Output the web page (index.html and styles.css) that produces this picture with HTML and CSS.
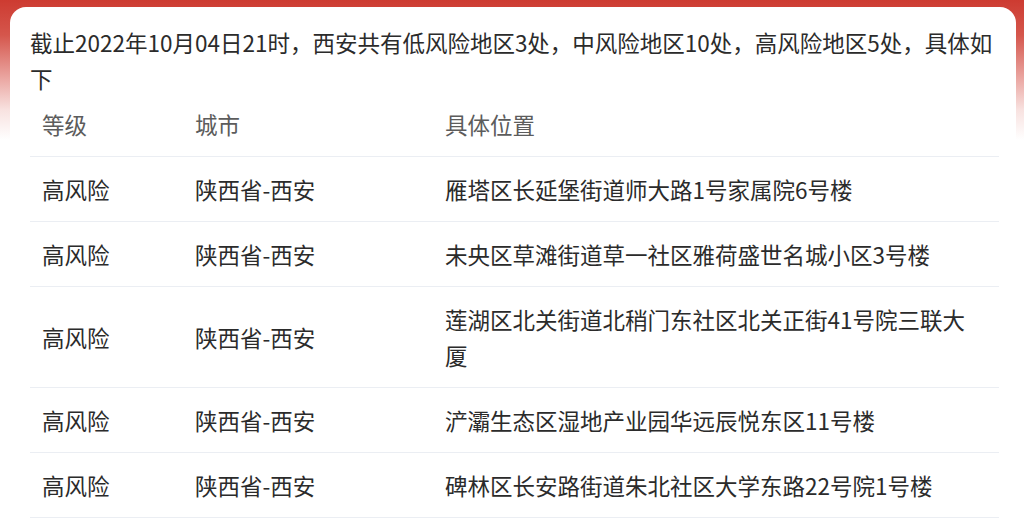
FILE: index.html
```html
<!DOCTYPE html>
<html lang="zh-CN">
<head>
<meta charset="utf-8">
<link rel="stylesheet" href="styles.css">
</head>
<body>
<div class="card">
  <p class="intro">截止2022年10月04日21时，西安共有低风险地区3处，中风险地区10处，高风险地区5处，具体如下</p>
  <table class="risk">
    <thead>
      <tr><th class="c1">等级</th><th class="c2">城市</th><th class="c3">具体位置</th></tr>
    </thead>
    <tbody>
      <tr><td>高风险</td><td>陕西省-西安</td><td>雁塔区长延堡街道师大路1号家属院6号楼</td></tr>
      <tr><td>高风险</td><td>陕西省-西安</td><td>未央区草滩街道草一社区雅荷盛世名城小区3号楼</td></tr>
      <tr><td>高风险</td><td>陕西省-西安</td><td>莲湖区北关街道北稍门东社区北关正街41号院三联大厦</td></tr>
      <tr><td>高风险</td><td>陕西省-西安</td><td>浐灞生态区湿地产业园华远辰悦东区11号楼</td></tr>
      <tr><td>高风险</td><td>陕西省-西安</td><td>碑林区长安路街道朱北社区大学东路22号院1号楼</td></tr>
    </tbody>
  </table>
</div>
</body>
</html>
```

FILE: styles.css
```css
html, body {
  margin: 0;
  padding: 0;
}
body {
  width: 1024px;
  height: 521px;
  overflow: hidden;
  background: linear-gradient(180deg, #cd3b31 0px, #d5564c 35px, #e9a09b 75px, #f8e2e0 110px, #ffffff 140px);
  font-family: "Noto Sans CJK SC", "Noto Sans", sans-serif;
}
.card {
  margin: 7px 8px 0 10px;
  background: #fff;
  border-radius: 16px 16px 0 0;
  padding: 17px 19px 0 20px;
  height: 514px;
  overflow: hidden;
  box-sizing: border-box;
}
.intro {
  margin: 0;
  font-size: 22.5px;
  line-height: 36px;
  color: #2b2b2b;
}
.risk {
  width: 969px;
  border-collapse: collapse;
  table-layout: fixed;
  font-size: 22.5px;
  margin-top: -4px;
}
.risk th, .risk td {
  text-align: left;
  font-weight: normal;
  padding: 14px 12px;
  line-height: 36px;
  border-bottom: 1px solid #ebeef3;
  vertical-align: middle;
}
.risk th {
  color: #5c5c5c;
}
.risk td {
  color: #2b2b2b;
}
.risk td:last-child, .risk th:last-child {
  padding-right: 30px;
}
.c1 { width: 129px; }
.c2 { width: 226px; }
```
